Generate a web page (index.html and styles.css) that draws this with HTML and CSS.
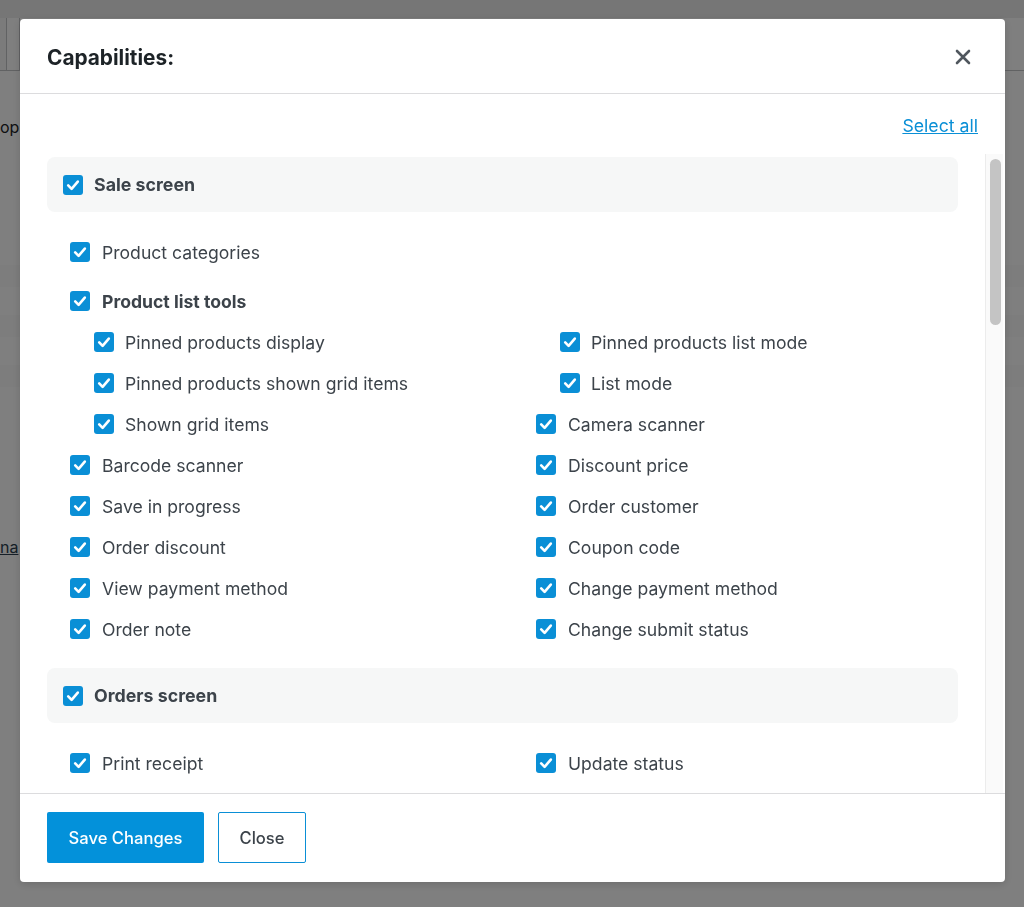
FILE: index.html
```html
<!DOCTYPE html>
<html lang="en">
<head>
  <meta charset="UTF-8" />
  <meta name="viewport" content="width=device-width, initial-scale=1.0" />
  <title>Capabilities</title>
  <link rel="stylesheet" href="styles.css">
</head>
<body>
  <div class="page">
    <div class="page-top"></div>
    <div class="page-tabs">
      <span class="page-tab"></span>
      <span class="page-tab"></span>
    </div>
    <p class="page-text">op</p>
    <div class="page-rows">
      <div class="page-row"></div>
      <div class="page-row"></div>
      <div class="page-row"></div>
    </div>
    <a class="page-link" href="#">na</a>
  </div>

  <div class="backdrop"></div>

  <div class="modal">
    <div class="modal-header">
      <h2 class="modal-title">Capabilities:</h2>
      <button class="modal-close" aria-label="Close">
        <svg width="16" height="16" viewBox="0 0 16 16"><path d="M2 2 L14 14 M14 2 L2 14" stroke="#50575e" stroke-width="2.6" stroke-linecap="round"/></svg>
      </button>
    </div>

    <div class="modal-body">
      <div class="select-row"><a href="#" class="select-all">Select all</a></div>

      <div class="scroll-wrap">
        <div class="scroll" id="scroll"></div>
        <div class="scrollbar"><div class="thumb"></div></div>
      </div>
    </div>

    <div class="modal-footer">
      <button class="btn btn-primary">Save Changes</button>
      <button class="btn btn-secondary">Close</button>
    </div>
  </div>

  <script>
    const sections = [
      {
        title: 'Sale screen',
        items: [
          { text: 'Product categories', span: true, cls: 'gap-after' },
          { text: 'Product list tools', span: true, bold: true },
          { text: 'Pinned products display', sub: true },
          { text: 'Pinned products list mode', sub: true },
          { text: 'Pinned products shown grid items', sub: true },
          { text: 'List mode', sub: true },
          { text: 'Shown grid items', sub: true },
          { text: 'Camera scanner' },
          { text: 'Barcode scanner' },
          { text: 'Discount price' },
          { text: 'Save in progress' },
          { text: 'Order customer' },
          { text: 'Order discount' },
          { text: 'Coupon code' },
          { text: 'View payment method' },
          { text: 'Change payment method' },
          { text: 'Order note' },
          { text: 'Change submit status' }
        ]
      },
      {
        title: 'Orders screen',
        items: ['Print receipt', 'Update status'].map(t => ({ text: t }))
      }
    ];

    const check = '<span class="box"><svg width="20" height="20" viewBox="0 0 20 20"><path d="M5.2 10.4 L8.6 13.8 L14.8 6.6" fill="none" stroke="#fff" stroke-width="2.6" stroke-linecap="round" stroke-linejoin="round"/></svg></span>';

    document.getElementById('scroll').innerHTML = sections.map(section => `
      <div class="section">
        <label class="section-head">${check}<span>${section.title}</span></label>
        <div class="items">
          ${section.items.map(item => {
            const cls = ['item'];
            if (item.span) cls.push('span');
            if (item.sub) cls.push('sub');
            if (item.bold) cls.push('bold');
            if (item.cls) cls.push(item.cls);
            return `<label class="${cls.join(' ')}">${check}<span>${item.text}</span></label>`;
          }).join('')}
        </div>
      </div>
    `).join('');
  </script>
</body>
</html>
```

FILE: styles.css
```css
body {
  margin: 0;
  background: #ffffff;
  font-family: Inter, "Open Sans", "Liberation Sans", sans-serif;
  color: #3c434a;
  overflow: hidden;
  height: 907px;
}
.page-top {
  height: 18px;
  background: #ececec;
}
.page-tabs {
  height: 52px;
  display: flex;
  border-bottom: 1px solid #c3c4c7;
}
.page-tab {
  width: 6px;
  border-right: 1px solid #c3c4c7;
  background: #f6f7f7;
}
.page-tab + .page-tab {
  width: 12px;
  background: #fff;
}
.page-text {
  margin: 46px 0 0 0;
  font-size: 16px;
  color: #1d2327;
  line-height: 20px;
}
.page-rows {
  margin-top: 128px;
}
.page-row {
  height: 22px;
  margin-bottom: 28px;
  background: #fafafa;
}
.page-link {
  display: block;
  margin-top: 150px;
  font-size: 16px;
  color: #2c3e50;
}
.backdrop {
  position: fixed;
  inset: 0;
  background: rgba(0, 0, 0, 0.5);
}
.modal {
  position: fixed;
  top: 19px;
  left: 20px;
  width: 985px;
  height: 863px;
  background: #fff;
  border-radius: 4px;
  display: flex;
  flex-direction: column;
  box-shadow: 0 2px 8px rgba(0, 0, 0, 0.15);
}
.modal-header {
  height: 75px;
  box-sizing: border-box;
  flex-shrink: 0;
  display: flex;
  align-items: center;
  justify-content: space-between;
  padding: 2px 34px 0 27px;
  border-bottom: 1px solid #dcdcde;
}
.modal-title {
  margin: 0;
  font-size: 20.8px;
  font-weight: 700;
  color: #1d2327;
}
.modal-close {
  border: none;
  background: none;
  padding: 0;
  width: 16px;
  height: 16px;
  cursor: pointer;
}
.modal-body {
  flex: 1;
  min-height: 0;
  display: flex;
  flex-direction: column;
}
.select-row {
  text-align: right;
  padding: 22px 27px 0 27px;
  line-height: 20px;
  margin-bottom: 18px;
}
.select-all {
  color: #0a8fd6;
  font-size: 17.7px;
}
.scroll-wrap {
  flex: 1;
  min-height: 0;
  display: flex;
  margin-right: 2px;
}
.scroll {
  flex: 1;
  min-width: 0;
  overflow: hidden;
  padding: 3px 27px 0 27px;
}
.scrollbar {
  width: 18px;
  box-sizing: border-box;
  flex-shrink: 0;
  background: #fafafa;
  border-left: 1px solid #ececec;
  padding: 5px 2px 0 4px;
}
.thumb {
  height: 166px;
  background: #c4c4c4;
  border-radius: 6px;
}
.section-head {
  height: 55px;
  background: #f6f7f7;
  border-radius: 8px;
  display: flex;
  align-items: center;
  gap: 11px;
  padding-left: 16px;
  font-size: 17.8px;
  font-weight: 700;
}
.items {
  display: grid;
  grid-template-columns: 466px 1fr;
  row-gap: 21px;
  padding: 30px 0 29px 23px;
}
.item {
  display: flex;
  align-items: center;
  gap: 12px;
  height: 20px;
  font-size: 17.6px;
  white-space: nowrap;
}
.item.span {
  grid-column: 1 / -1;
}
.item.gap-after {
  margin-bottom: 8px;
}
.item.bold {
  font-weight: 700;
}
.item.sub {
  margin-left: 24px;
  gap: 11px;
}
.box {
  width: 20px;
  height: 20px;
  flex-shrink: 0;
  background: #0a8fd6;
  border-radius: 3px;
  display: block;
}
.box svg {
  display: block;
}
.modal-footer {
  flex-shrink: 0;
  border-top: 1px solid #dcdcde;
  padding: 18px 27px 19px 27px;
  display: flex;
  gap: 14px;
}
.btn {
  height: 51px;
  font-family: inherit;
  font-size: 16.6px;
  font-weight: 500;
  border-radius: 2px;
  cursor: pointer;
}
.btn-primary {
  width: 157px;
  background: #0391da;
  color: #fff;
  border: none;
}
.btn-secondary {
  width: 88px;
  background: #fff;
  color: #3c434a;
  border: 1px solid #0a8fd6;
}
```
